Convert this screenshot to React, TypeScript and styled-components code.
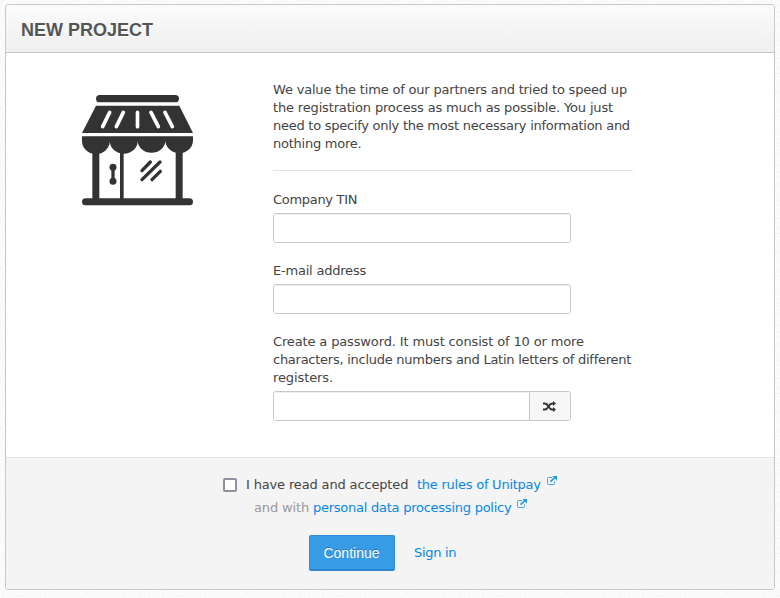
import React from "react";
import styled, { createGlobalStyle } from "styled-components";

const grain = encodeURIComponent(
  '<svg xmlns="http://www.w3.org/2000/svg" width="160" height="160"><filter id="n" x="0" y="0" width="1" height="1"><feTurbulence type="fractalNoise" baseFrequency=".45" numOctaves="2" stitchTiles="stitch"/><feColorMatrix values="0 0 0 0 .6  0 0 0 0 .6  0 0 0 0 .6  .4 0 0 0 -.15"/></filter><rect width="160" height="160" filter="url(#n)"/></svg>'
);

const GlobalStyle = createGlobalStyle`
  * { box-sizing: border-box; }
  body {
    margin: 0;
    background: #fdfdfd url("data:image/svg+xml,${grain}");
    color: #444;
    font: 13px/18px Verdana, "DejaVu Sans", sans-serif;
    overflow: hidden;
  }
`;

const Panel = styled.section`
  width: 770px;
  height: 586px;
  margin: 4px 0 0 5px;
  border: 1px solid #c8c8c8;
  border-radius: 3px;
  background: #fff;
  overflow: hidden;
  display: flex;
  flex-direction: column;
`;

const Header = styled.header`
  height: 48px;
  flex: none;
  padding: 0 15px;
  display: flex;
  align-items: center;
  border-bottom: 1px solid #c8c8c8;
  background: linear-gradient(#fbfbfb, #efefef);
`;

const Title = styled.h1`
  margin: 2px 0 0;
  font: bold 18px/24px "Liberation Sans", Arial, sans-serif;
  color: #555;
  text-shadow: 0 1px 0 #fff;
`;

const Body = styled.div`
  flex: 1;
  display: grid;
  grid-template-columns: 267px 360px;
`;

const Artwork = styled.div`
  padding: 42px 0 0 76px;
`;

const Form = styled.form`
  padding-top: 28px;
`;

const Line = styled.span<{ $spacing?: number }>`
  display: block;
  white-space: nowrap;
  letter-spacing: ${(p) => p.$spacing ?? 0}px;
`;

const Intro = styled.div`
  padding-bottom: 17px;
  margin-bottom: 20px;
  border-bottom: 1px solid #e3e3e3;
`;

const Field = styled.label`
  display: block;
  margin-bottom: 19px;
`;

const InputGroup = styled.span`
  display: flex;
  width: 298px;
  height: 30px;
  margin-top: 4px;
  border: 1px solid #c8c8c8;
  border-radius: 3px;
  overflow: hidden;
`;

const Input = styled.input`
  flex: 1;
  min-width: 0;
  border: 0;
  padding: 4px 6px;
  outline: 0;
  background: #fff;
  box-shadow: inset 0 1px 1px rgba(0, 0, 0, 0.075);
`;

const Generate = styled.button`
  width: 41px;
  padding: 0 1px 0 0;
  border: 0;
  border-left: 1px solid #c8c8c8;
  background: #f7f7f7;
  color: #333;
  display: flex;
  align-items: center;
  justify-content: center;
`;

const Footer = styled.footer`
  height: 132px;
  flex: none;
  border-top: 1px solid #e3e3e3;
  background: #f4f4f4;
`;

const Consent = styled.div<{ $left: number; $top: number }>`
  display: flex;
  height: 18px;
  margin: ${(p) => p.$top}px 0 0 ${(p) => p.$left}px;
`;

const Checkbox = styled.input`
  appearance: none;
  width: 14px;
  height: 14px;
  margin: 2px 9px 0 0;
  border: 2px solid #8f8f9d;
  border-radius: 2px;
  background: #fff;
`;

const Muted = styled.span`
  color: #999;
  width: 59px;
  white-space: nowrap;
  letter-spacing: -0.12px;
`;

const Accepted = styled.label`
  width: 171px;
  white-space: nowrap;
  letter-spacing: -0.15px;
`;

const Link = styled.a<{ $spacing?: number }>`
  color: #0688e6;
  text-decoration: none;
  white-space: nowrap;
  letter-spacing: ${(p) => p.$spacing ?? 0}px;
`;

const External = styled.svg`
  width: 10px;
  height: 9px;
  margin: 0 0 0 6px;
  color: #1c94e8;
`;

const Actions = styled.div`
  display: flex;
  align-items: center;
  gap: 19px;
  margin: 18px 0 0 303px;
`;

const Submit = styled.button`
  width: 86px;
  height: 36px;
  border: 1px solid #3290dc;
  border-bottom: 2px solid #2c86d0;
  border-radius: 2px;
  padding: 1px 1px 0 0;
  background: #389be5;
  color: #fff;
  font: 14px "Liberation Sans", Arial, sans-serif;
  text-shadow: 0 -1px 0 rgba(0, 0, 0, 0.25);
`;

const ExternalIcon = () => (
  <External viewBox="0 0 10 9" fill="none" stroke="currentColor">
    <path d="M5 1.5H1.5Q.5 1.5 .5 2.5V7.5Q.5 8.5 1.5 8.5H6.5Q7.5 8.5 7.5 7.5V5.5" strokeOpacity=".8" />
    <path d="M3.5 5.7L8 1.5" strokeWidth="1.7" />
    <path d="M5.500 0H10V4.500Z" fill="currentColor" stroke="none" />
  </External>
);

const ShuffleIcon = () => (
  <svg width="13" height="11" viewBox="0 0 13 11" fill="none" stroke="currentColor" strokeWidth="1.9">
    <path d="M0 2.500H2C5.500 2.500 5.500 8.500 9 8.500H10.500" />
    <path d="M0 8.500H2C5.500 8.500 5.500 2.500 9 2.500H10.500" />
    <path d="M10 0L13 2.500L10 5ZM10 6L13 8.500L10 11Z" fill="currentColor" stroke="none" />
  </svg>
);

const StoreIcon = () => (
  <svg width="111" height="111" viewBox="36 29 333 333" fill="#333" stroke="#333" strokeWidth="0">
    <rect x="78" y="29" width="249" height="22" rx="11" />
    <path d="M78 61H328L369 143H36Z" />
    <path
      d="M119 81L98 124M160 81L139 124M202.5 81V124M243 81L265 124M285 81L307 124"
      stroke="#fff"
      strokeWidth="11"
      strokeLinecap="round"
    />
    <path d="M36 153H369V166A41.6 39 0 0 1 286 168A41.6 37 0 0 1 203 168A41.6 37 0 0 1 119.500 168A41.6 39 0 0 1 36 166Z" />
    <path d="M67 195H88V345H67ZM150 195H161V345H150ZM317 195H338V345H317Z" />
    <rect x="36" y="339" width="333" height="21" rx="10.500" />
    <circle cx="129" cy="246" r="10.500" />
    <circle cx="129" cy="288" r="10.500" />
    <path
      d="M129 246V288M216 256L241 230M216 283L270 230M246 283L271 258"
      fill="none"
      strokeWidth="10"
      strokeLinecap="round"
    />
  </svg>
);

export default function App() {
  return (
    <>
      <GlobalStyle />
      <Panel>
        <Header>
          <Title>NEW PROJECT</Title>
        </Header>
        <Body>
          <Artwork>
            <StoreIcon />
          </Artwork>
          <Form>
            <Intro>
              <Line $spacing={-0.19}>We value the time of our partners and tried to speed up</Line>
              <Line $spacing={-0.16}>the registration process as much as possible. You just</Line>
              <Line $spacing={-0.26}>need to specify only the most necessary information and</Line>
              <Line $spacing={-0.25}>nothing more.</Line>
            </Intro>
            <Field>
              <Line $spacing={-0.3}>Company TIN</Line>
              <InputGroup>
                <Input />
              </InputGroup>
            </Field>
            <Field>
              <Line $spacing={-0.21}>E-mail address</Line>
              <InputGroup>
                <Input type="email" />
              </InputGroup>
            </Field>
            <Field>
              <Line $spacing={-0.14}>Create a password. It must consist of 10 or more</Line>
              <Line $spacing={-0.26}>characters, include numbers and Latin letters of different</Line>
              <Line $spacing={-0.1}>registers.</Line>
              <InputGroup>
                <Input type="password" />
                <Generate type="button" aria-label="Generate password">
                  <ShuffleIcon />
                </Generate>
              </InputGroup>
            </Field>
          </Form>
        </Body>
        <Footer>
          <Consent $left={217} $top={18}>
            <Checkbox type="checkbox" id="rules" />
            <Accepted htmlFor="rules">I have read and accepted</Accepted>
            <Link href="#" $spacing={-0.24}>the rules of Unitpay</Link>
            <ExternalIcon />
          </Consent>
          <Consent $left={248} $top={5}>
            <Muted>and with</Muted>
            <Link href="#" $spacing={-0.25}>personal data processing policy</Link>
            <ExternalIcon />
          </Consent>
          <Actions>
            <Submit>Continue</Submit>
            <Link href="#" $spacing={-0.3}>Sign in</Link>
          </Actions>
        </Footer>
      </Panel>
    </>
  );
}
